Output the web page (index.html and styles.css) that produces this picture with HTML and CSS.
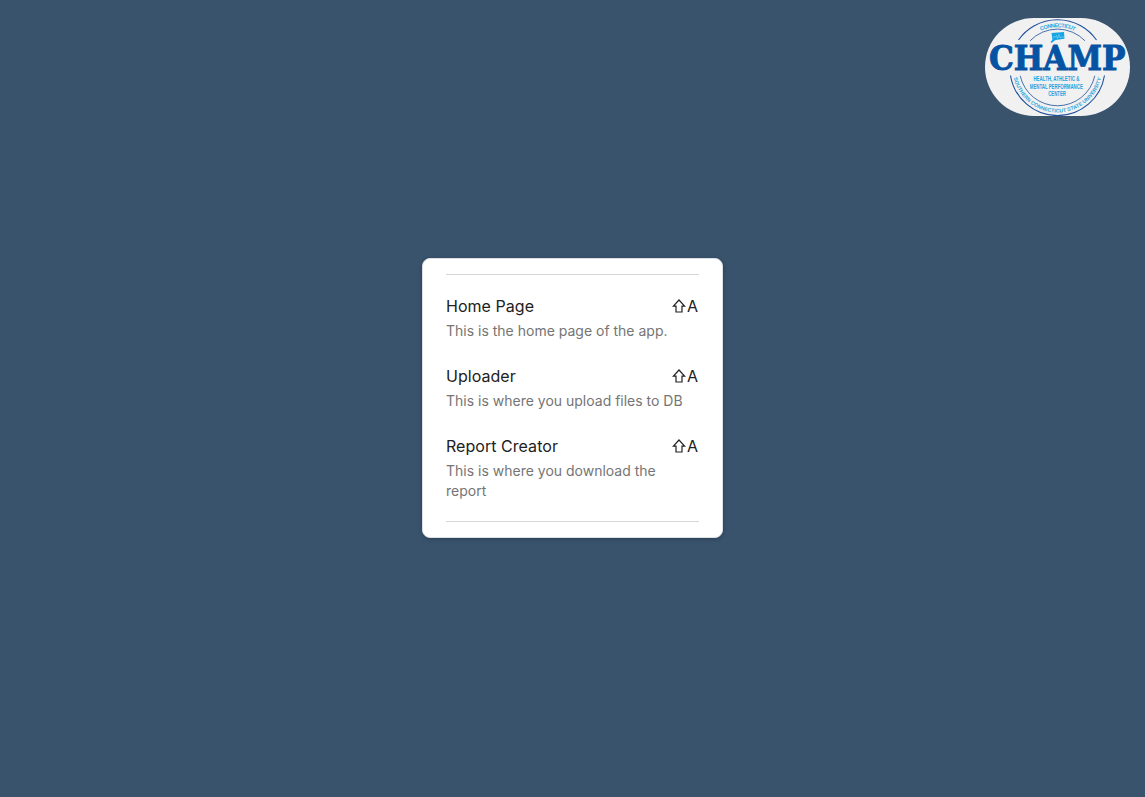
FILE: index.html
```html
<!DOCTYPE html>
<html lang="en">
<head>
<meta charset="utf-8">
<title>CHAMP</title>
<link rel="stylesheet" href="styles.css">
</head>
<body>
<svg class="logo" viewBox="0 0 145 98" role="img" aria-label="CHAMP">
  <defs>
    <path id="top-arc" d="M32.2 49.5A40.3 40.3 0 0 1 112.8 49.5"/>
    <path id="bottom-arc" d="M27.5 49.5A45 45 0 0 0 117.5 49.5"/>
  </defs>
  <g class="rings">
    <path d="M33.5 22A47.6 47.6 0 0 1 111.5 22"/>
    <path class="thin" d="M45 22.8A38.2 38.2 0 0 1 100 22.8"/>
    <path d="M25.5 57.5A47.6 47.6 0 0 0 119.5 57.5"/>
    <path class="thin" d="M35.2 57.8A38.2 38.2 0 0 0 109.8 57.8"/>
  </g>
  <text class="arc-text"><textPath href="#top-arc" startOffset="46" textLength="35">CONNECTICUT</textPath></text>
  <text class="arc-text small"><textPath href="#bottom-arc" startOffset="10.5" textLength="120">SOUTHERN CONNECTICUT STATE UNIVERSITY</textPath></text>
  <path class="state" d="M66.5 15L79 14L79.5 20.8L70.5 21.9L66.5 25L65.5 24L67.4 21.8Z"/>
  <path class="pulse" d="M67.5 19h3l1-1.5 1 3 1.5-4 1 3.5 1-1h3"/>
  <text class="word" x="4" y="52.3" textLength="136.5" lengthAdjust="spacingAndGlyphs">CHAMP</text>
  <g class="tagline">
    <text x="48.4" y="63.2" textLength="46" lengthAdjust="spacingAndGlyphs">HEALTH, ATHLETIC &amp;</text>
    <text x="44.8" y="70.5" textLength="53" lengthAdjust="spacingAndGlyphs">MENTAL PERFORMANCE</text>
    <text x="63.3" y="77.8" textLength="17.5" lengthAdjust="spacingAndGlyphs">CENTER</text>
  </g>
</svg>
<main class="card">
  <ul class="menu">
    <li class="item">
      <div class="row"><span class="title">Home Page</span><span class="keys"><svg class="shift" viewBox="0 0 14 14"><path d="M7 1L12.6 7.2H10V13H4V7.2H1.4Z"/></svg>A</span></div>
      <p class="desc">This is the home page of the app.</p>
    </li>
    <li class="item">
      <div class="row"><span class="title">Uploader</span><span class="keys"><svg class="shift" viewBox="0 0 14 14"><path d="M7 1L12.6 7.2H10V13H4V7.2H1.4Z"/></svg>A</span></div>
      <p class="desc">This is where you upload files to DB</p>
    </li>
    <li class="item">
      <div class="row"><span class="title">Report Creator</span><span class="keys"><svg class="shift" viewBox="0 0 14 14"><path d="M7 1L12.6 7.2H10V13H4V7.2H1.4Z"/></svg>A</span></div>
      <p class="desc">This is where you download the report</p>
    </li>
  </ul>
</main>
</body>
</html>
```

FILE: styles.css
```css
* { box-sizing: border-box; }
body {
  margin: 0;
  height: 100vh;
  display: flex;
  align-items: center;
  justify-content: center;
  background: #39536d;
  font-family: Inter, sans-serif;
}
.logo {
  position: absolute;
  top: 18px;
  right: 15px;
  width: 145px;
  height: 98px;
  border-radius: 49px;
  background: #f1f1f1;
}
.rings { fill: none; stroke: #1d4f9c; stroke-width: 1.1; }
.thin { stroke-width: 0.8; }
.arc-text { font: bold 5.6px "Liberation Sans", sans-serif; fill: #2ba6de; }
.small { font-size: 5.2px; }
.state { fill: #16a5e6; }
.pulse { fill: none; stroke: #a8def5; stroke-width: 0.5; }
.word { font: bold 33px "DejaVu Serif", serif; fill: #0653a3; stroke: #0653a3; stroke-width: 1; }
.tagline { font: bold 6.4px "Liberation Sans", sans-serif; fill: #1fa3e0; }
.card {
  width: 301px;
  height: 280px;
  margin-top: -1px;
  padding: 15px 23px;
  border: 1px solid #dcdfe3;
  border-radius: 8px;
  background: #fff;
  box-shadow: 0 1px 4px rgba(0, 0, 0, 0.25);
}
.menu {
  display: flex;
  flex-direction: column;
  gap: 24px;
  height: 248px;
  margin: 0;
  padding: 19px 0 0;
  list-style: none;
  border-top: 1px solid #d6d6d6;
  border-bottom: 1px solid #d6d6d6;
}
.row {
  display: flex;
  justify-content: space-between;
  height: 24px;
  line-height: 24px;
  font-size: 16px;
  color: #212121;
}
.title { letter-spacing: 0.04px; }
.keys { display: flex; align-items: center; gap: 1px; padding-right: 1px; }
.shift { width: 14px; height: 14px; fill: none; stroke: #212121; stroke-width: 1.2; }
.desc {
  margin: 3px 0 0;
  font-size: 14px;
  line-height: 20px;
  color: #757575;
}
.item { height: 46px; }
.item:last-child { height: 66px; }
```
